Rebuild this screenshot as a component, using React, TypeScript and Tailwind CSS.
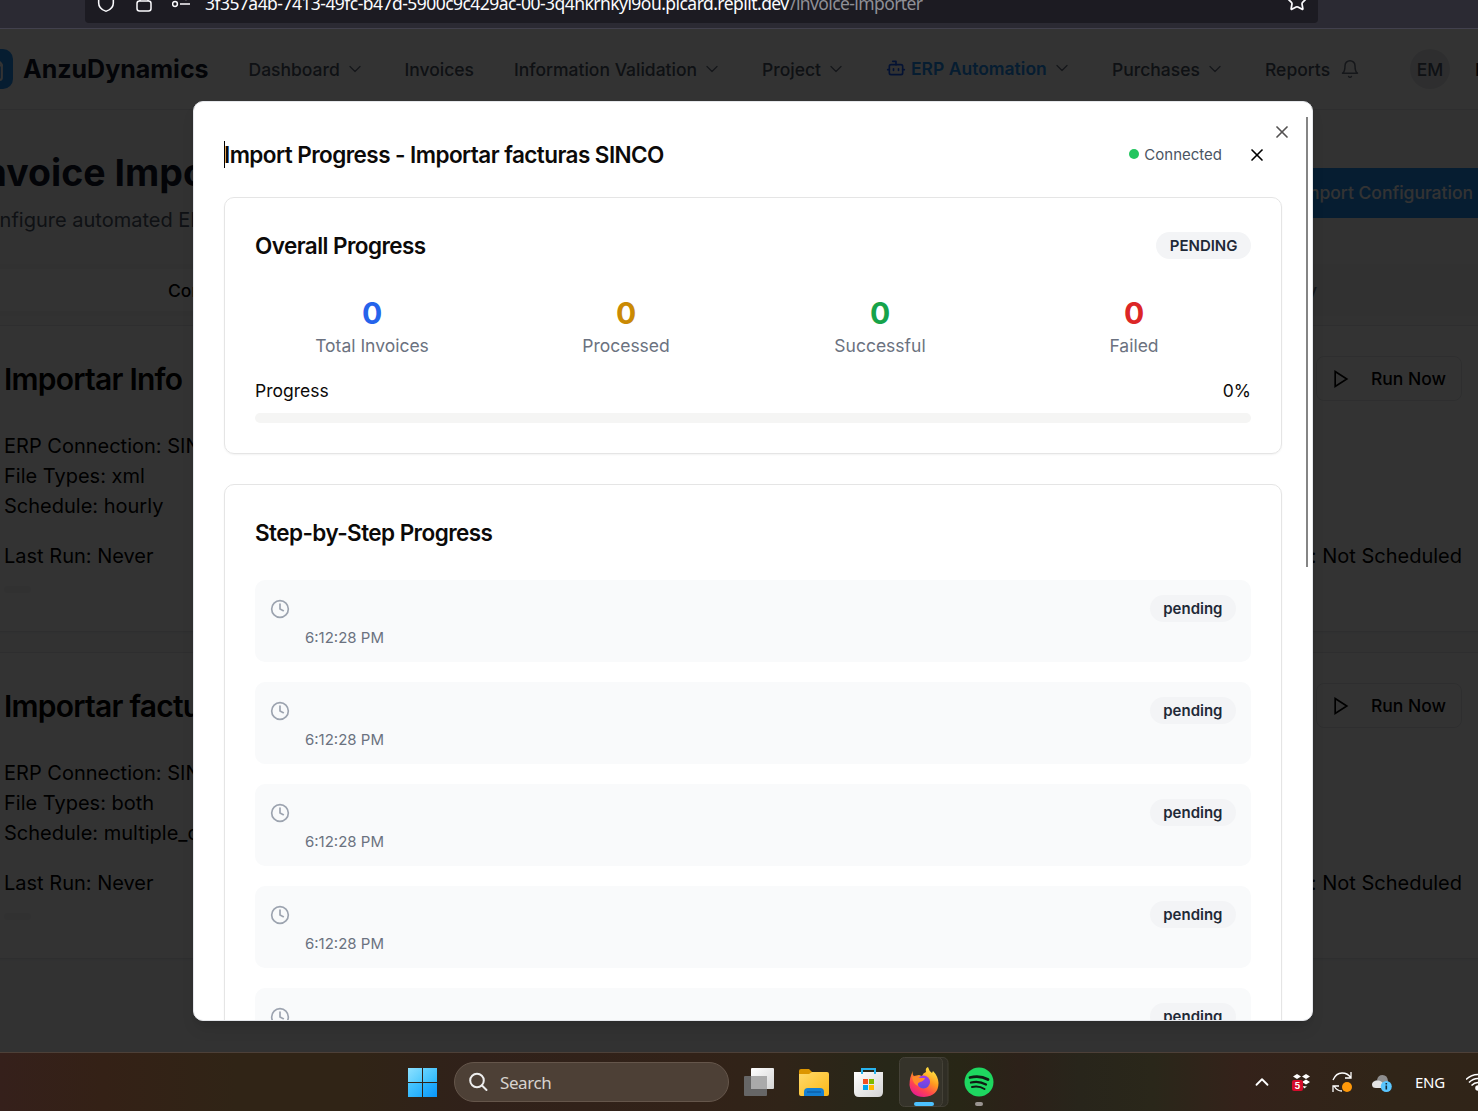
import React from "react";
import { Bot, ChevronDown, ChevronUp, Clock, FileText, X, Shield, Star } from "lucide-react";

function PlayIcon() {
  return (
    <svg className="size-5" viewBox="0 0 24 24" fill="none" stroke="currentColor" strokeWidth="2" strokeLinecap="round">
      <polygon points="5 3 19 12 5 21" strokeLinejoin="miter" />
    </svg>
  );
}

function BellIcon() {
  return (
    <svg className="size-5 shrink-0 text-gray-500" viewBox="0 0 24 24" fill="none" stroke="currentColor" strokeWidth="1.8" strokeLinecap="round" strokeLinejoin="round">
      <path d="M6 8a6 6 0 0 1 12 0c0 7 3 9 3 9H3s3-2 3-9" />
      <path d="M10.3 21a1.94 1.94 0 0 0 3.4 0" />
    </svg>
  );
}

function NavItem({ label, width, chevron = true }: { label: string; width: number; chevron?: boolean }) {
  return (
    <div className="flex shrink-0 items-center text-[17.5px] font-medium text-gray-600" style={{ width }}>
      <span className="mt-[2px]">{label}</span>
      {chevron && <ChevronDown className="ml-[5px] size-5 text-gray-500" strokeWidth={1.6} />}
    </div>
  );
}

function BrowserBar() {
  return (
    <div className="h-[29px] shrink-0 overflow-hidden border-b border-[#42414d] bg-[#2b2a33] pl-[85px]">
      <div className="flex h-[23px] w-[1233px] items-end rounded-b-[4px] bg-[#1c1b22] text-[#fbfbfe]">
        <Shield className="mb-[10px] ml-[10px] size-[22px] shrink-0" strokeWidth={1.7} />
        <svg className="mb-[11px] ml-[19px] h-[20px] w-[16px] shrink-0" viewBox="0 0 16 20" fill="none" stroke="currentColor" strokeWidth="1.5">
          <rect x="1" y="9" width="14" height="10" rx="2.5" />
          <path d="M4 9V5a4 4 0 0 1 8 0v4" />
        </svg>
        <svg className="mb-[15px] ml-[20px] h-[17px] w-[18px] shrink-0" viewBox="0 0 18 17" fill="none" stroke="currentColor" strokeWidth="1.5">
          <circle cx="3" cy="13" r="2.4" />
          <path d="M8 13h10M0 6h10" />
          <circle cx="14" cy="6" r="2.4" />
        </svg>
        <div className="mb-[8px] ml-[15px] flex w-[1081px] whitespace-nowrap font-['Noto_Sans','Open_Sans',sans-serif] text-[17.5px] leading-6">
          <span className="w-[585px] tracking-[-0.54px]">3f357a4b-7413-49fc-b47d-5900c9c429ac-00-3q4hkrhkyl9ou.picard.replit.dev</span>
          <span className="tracking-[-0.6px] text-[#8f8f96]">/invoice-importer</span>
        </div>
        <Star className="mb-[11px] size-[22px] shrink-0" strokeWidth={1.9} />
      </div>
    </div>
  );
}

function Header() {
  return (
    <header className="flex h-[81px] items-center border-b border-gray-200 bg-white">
      <div className="-ml-[27px] flex size-10 shrink-0 items-center justify-center rounded-[10px] bg-[#2090f3]">
        <FileText className="size-[25px] text-white" />
      </div>
      <div className="ml-[10px] mt-[2px] w-[225.5px] shrink-0 text-[25px] font-bold text-gray-900">AnzuDynamics</div>
      <NavItem label="Dashboard" width={156} />
      <NavItem label="Invoices" width={109.5} chevron={false} />
      <NavItem label="Information Validation" width={248} />
      <NavItem label="Project" width={124} />
      <div className="relative -top-px flex w-[226px] shrink-0 items-center text-[17.5px] font-semibold text-[#2090f3]">
        <Bot className="mr-[5px] size-5 text-blue-600" />
        <span className="mt-[2px]">ERP Automation</span>
        <ChevronDown className="ml-[5px] size-5 text-gray-500" strokeWidth={1.6} />
      </div>
      <NavItem label="Purchases" width={153} />
      <NavItem label="Reports" width={75} chevron={false} />
      <BellIcon />
      <div className="ml-[50px] flex size-10 shrink-0 items-center justify-center rounded-full bg-gray-200 text-[17.5px] font-medium text-gray-600">
        <span className="mt-[2px]">EM</span>
      </div>
      <span className="ml-[25px] mt-[2px] text-[17.5px] font-medium text-gray-900">E</span>
    </header>
  );
}

function ConfigCard({ title, types, schedule }: { title: string; types: string; schedule: string }) {
  return (
    <section className="-mx-[27px] h-[307px] border border-gray-200 bg-white px-[30px] pt-[30px] shadow-[0_1px_2px_rgba(0,0,0,0.05)]">
      <div className="flex h-[47px] items-center justify-between">
        <h2 className="text-[30px] font-semibold tracking-[-0.75px]">{title}</h2>
        <div className="mb-[2px] mr-[12px] flex h-[45px] w-[146px] items-center rounded-[8px] border border-gray-200 pl-[14px] text-[17.5px] font-medium">
          <PlayIcon />
          <span className="ml-[20px] mt-px">Run Now</span>
        </div>
      </div>
      <div className="mt-[28px] text-[20px] leading-[30px]">
        <p>ERP Connection: SINCO</p>
        <p>File Types: {types}</p>
        <p>Schedule: {schedule}</p>
      </div>
      <div className="mr-[12px] mt-[20px] flex justify-between text-[20px] leading-[30px]">
        <span>Last Run: Never</span>
        <span>Next Run: Not Scheduled</span>
      </div>
      <div className="mt-[15px] h-[7px] w-[27px] rounded-full bg-gray-100" />
    </section>
  );
}

function Page() {
  return (
    <div className="h-[1023px] overflow-hidden bg-gray-50 text-black">
      <Header />
      <div className="flex h-[154px] justify-between overflow-hidden pt-[38px]">
        <div className="-ml-[27px] whitespace-nowrap">
          <h1 className="text-[37.5px] font-bold leading-[50px] text-gray-900">Invoice Importer</h1>
          <p className="mt-[7px] text-[20px] leading-[30px] text-gray-600">Configure automated ERP invoice imports</p>
        </div>
        <div className="mt-[20px] flex h-[50px] items-center whitespace-nowrap bg-[#2090f3] pl-8 pr-[5px] text-[17.5px] font-medium text-white">New Import Configuration</div>
      </div>
      <div className="flex h-[52px] items-center bg-stone-100 text-[17.5px] font-medium">
        <div className="flex h-[42px] w-[520px] items-center bg-white pl-[168px] pt-[2px]">Configurations</div>
        <div className="ml-[567px] w-[230px] pt-[2px] text-right text-gray-500">History</div>
      </div>
      <div className="mt-[9px] space-y-5">
        <ConfigCard title="Importar Info" types="xml" schedule="hourly" />
        <ConfigCard title="Importar facturas SINCO" types="both" schedule="multiple_daily" />
      </div>
    </div>
  );
}

const stats = [
  { label: "Total Invoices", color: "text-[#2563eb]" },
  { label: "Processed", color: "text-[#ca8a04]" },
  { label: "Successful", color: "text-[#16a34a]" },
  { label: "Failed", color: "text-[#dc2626]" },
];

function Badge({ children }: { children: React.ReactNode }) {
  return <span className="flex h-[27px] items-center rounded-full bg-[#f3f4f6] px-[13.5px] pt-px text-[15px] font-semibold text-[#1f2937]">{children}</span>;
}

function Step() {
  return (
    <div className="flex h-[82px] items-start rounded-[10px] bg-[#f9fafb] p-[15px]">
      <Clock className="mt-[4px] size-5 text-[#9ca3af]" />
      <div className="ml-[15px] mt-[32px] flex-1 text-[15px] leading-[22px] text-[#6b7280]">6:12:28 PM</div>
      <Badge>pending</Badge>
    </div>
  );
}

function Modal() {
  return (
    <div className="absolute left-[193px] top-[101px] h-[920px] w-[1120px] overflow-hidden rounded-[10px] border border-gray-200 bg-white px-[30px] pt-[30px] text-[#0c0a09] shadow-lg">
      <X className="absolute right-[20px] top-[20px] size-5 opacity-70" />
      <div className="absolute right-[4px] top-[15px] h-[450px] w-[2px] bg-[#858585]" />
      <div className="flex h-[45px] items-center justify-between">
        <div className="flex items-center">
          <span className="-mr-px h-[27px] w-px bg-black" />
          <h2 className="text-[22.5px] font-semibold tracking-[-0.5625px]">Import Progress - Importar facturas SINCO</h2>
        </div>
        <div className="mr-[15px] flex items-center text-[15px] text-[#4b5563]">
          <span className="mb-px mr-[5px] size-[10px] rounded-full bg-[#22c55e]" />
          <span className="mt-px">Connected</span>
          <X className="ml-[25px] size-5 text-black" />
        </div>
      </div>
      <section className="mt-[20px] h-[257px] rounded-[10px] border border-[#e5e5e5] px-[30px] pt-[30px] shadow-[0_1px_2px_rgba(0,0,0,0.05)]">
        <div className="flex h-[35px] items-center justify-between">
          <h3 className="text-[22.5px] font-semibold tracking-[-0.5625px]">Overall Progress</h3>
          <Badge>PENDING</Badge>
        </div>
        <div className="mt-[31px] grid grid-cols-4 gap-5 text-center">
          {stats.map((s) => (
            <div key={s.label}>
              <div className={`mb-px text-[30px] font-bold leading-[38px] ${s.color}`}>0</div>
              <div className="text-[17.5px] leading-[25px] text-[#6b7280]">{s.label}</div>
            </div>
          ))}
        </div>
        <div className="mt-[20px] flex justify-between text-[17.5px] leading-[25px]">
          <span>Progress</span>
          <span>0%</span>
        </div>
        <div className="mt-[10px] h-[10px] rounded-full bg-[#f5f5f4]" />
      </section>
      <section className="mt-[30px] rounded-[10px] border border-[#e5e5e5] px-[30px] pt-[30px] shadow-[0_1px_2px_rgba(0,0,0,0.05)]">
        <h3 className="h-[65px] text-[22.5px] font-semibold leading-[35px] tracking-[-0.5625px]">Step-by-Step Progress</h3>
        <div className="space-y-5 pb-[30px]">
          {[0, 1, 2, 3, 4, 5].map((i) => (
            <Step key={i} />
          ))}
        </div>
      </section>
    </div>
  );
}

function TaskbarIcons() {
  return (
    <svg className="ml-[11px] h-[58px] w-[280px] shrink-0" viewBox="740 1053 280 58">
      <defs>
        <linearGradient id="white" x1="0" y1="0" x2="1" y2="1"><stop stopColor="#fff" /><stop offset="1" stopColor="#d4d4d4" /></linearGradient>
        <linearGradient id="folder" x1="0" y1="0" x2="1" y2="1"><stop stopColor="#ffd96b" /><stop offset="1" stopColor="#fbb917" /></linearGradient>
        <linearGradient id="fox" x1=".8" y1="0" x2=".2" y2="1"><stop stopColor="#fff14a" /><stop offset=".4" stopColor="#ff9a1f" /><stop offset=".7" stopColor="#ff4450" /><stop offset="1" stopColor="#e3159a" /></linearGradient>
        <linearGradient id="globe" x1="0" y1="0" x2="0" y2="1"><stop stopColor="#a33bea" /><stop offset="1" stopColor="#5b4be0" /></linearGradient>
      </defs>
      <rect x="744" y="1076" width="23" height="20" rx="1" fill="#666" />
      <rect x="751" y="1068" width="23" height="21" rx="1" fill="url(#white)" />
      <path d="M751 1076h16v13h-16z" fill="#aaa" />
      <path d="M799 1071q0-2 2-2h8l3 3v5h-13z" fill="#dc9500" />
      <path d="M799 1074h10l3-2h15q2 0 2 2v20q0 2-2 2h-26q-2 0-2-2z" fill="url(#folder)" />
      <path d="M804 1096v-4q0-4 4-4h12q4 0 4 4v4z" fill="#137fd2" />
      <path d="M807 1092h14" stroke="#075398" />
      <path d="M854 1072h29v20q0 5-5 5h-19q-5 0-5-5z" fill="url(#white)" />
      <path d="M862 1074v-5h13v5" fill="none" stroke="#28b4ee" strokeWidth="2" />
      <path d="M863 1079h5v5h-5z" fill="#f25022" /><path d="M869 1079h5v5h-5z" fill="#7fba00" />
      <path d="M863 1085h5v5h-5z" fill="#00a4ef" /><path d="M869 1085h5v5h-5z" fill="#ffb900" />
      <rect x="904" y="1057.5" width="44" height="49" rx="5" fill="#302e25" stroke="#413e34" />
      <rect x="899.5" y="1057.5" width="43" height="49" rx="5" fill="#35332a" stroke="#454238" />
      <path d="M913 1071q-1 4 1 5l5-1 3 1q1-3 4-4-1-4 2-5 1 4 4 6l1-2q5 5 5.500 12 0 13-14.500 14-13 0-14.500-12 0-8 3.500-14z" fill="url(#fox)" />
      <circle cx="923.5" cy="1082" r="6.500" fill="url(#globe)" />
      <path d="M912 1077q5-1 8 1h5q-1 3-5 4-3 1-2 4-5-2-6-9z" fill="#ff8b2a" />
      <rect x="914" y="1102" width="20" height="4" rx="2" fill="#4cc2ff" />
      <circle cx="979" cy="1082" r="14.5" fill="#1ed760" />
      <g fill="none" stroke="#101b14" strokeLinecap="round">
        <path d="M970 1077.500q10-2.500 18 2" strokeWidth="2.800" />
        <path d="M971 1082.500q8-2 15 2" strokeWidth="2.300" />
        <path d="M972 1087q7-1.500 12.500 2" strokeWidth="2" />
      </g>
      <rect x="975" y="1102" width="8" height="4" rx="2" fill="#9a9490" />
    </svg>
  );
}

function Tray() {
  return (
    <svg className="h-[40px] w-[104px] shrink-0" viewBox="1290 1062 104 40">
      <path d="m1297 1074 4 2.500-4 2.500-4-2.500zM1306 1074l4 2.500-4 2.500-4-2.500zM1306 1079.500l4 2.500-4 2.500-4-2.500zM1303 1086l4 .5-3 2z" fill="#fff" />
      <rect x="1292" y="1080" width="11" height="11" rx="2" fill="#d50b2b" />
      <text x="1297.500" y="1089" textAnchor="middle" fontSize="9" fontWeight="700" fill="#fff">5</text>
      <g fill="none" stroke="#fff" strokeWidth="1.300">
        <path d="M1333 1080q3-7 9-7 6 0 9 5M1351 1072v6h-6M1342 1091q-5 0-8-5M1333 1092v-6h6" />
      </g>
      <circle cx="1347" cy="1087" r="5" fill="#ff990a" />
      <path d="M1376 1087q-3 0-3-3.500 0-3 4-3.500 1-5 5.500-5 5 0 5.500 6v6z" fill="#8e8e8e" />
      <path d="M1376 1088q-4 0-4-3.500 0-3 3.500-3.500 5-2 8 3v4z" fill="#e4e4e4" />
      <circle cx="1386.300" cy="1086.500" r="5.500" fill="#5ac6ff" />
      <path d="M1386.300 1083v1.500M1386.300 1085.500v4" stroke="#152c3d" strokeWidth="1.600" />
    </svg>
  );
}

function Taskbar() {
  return (
    <footer className="flex h-[59px] shrink-0 items-center border-t border-[#4d4038] bg-[linear-gradient(90deg,#35201b_0%,#342116_7%,#302416_16%,#302416_24%,#30211a_32%,#322218_47%,#302418_53%,#272718_60%,#282616_65%,#2c2119_69%,#28251b_73%,#2a271a_78%,#34221a_84%,#302518_94%,#302418_100%)]">
      <div className="ml-[408px] grid h-[29px] w-[29px] shrink-0 grid-cols-2 gap-px">
        <span className="bg-linear-to-br from-[#8be0ff] to-[#4cc9fd]" />
        <span className="bg-linear-to-br from-[#65d3ff] to-[#29b8fb]" />
        <span className="bg-linear-to-br from-[#4ac8ff] to-[#1fabfb]" />
        <span className="bg-linear-to-br from-[#2eb7fd] to-[#0796fa]" />
      </div>
      <div className="ml-[17px] flex h-[40px] w-[275px] shrink-0 items-center rounded-full border border-[#65564b] bg-[#4d4036] font-['Noto_Sans','Open_Sans',sans-serif] text-[17px] text-[#d8d3cf]">
        <svg className="ml-[13px] mr-[12px] size-5" viewBox="0 0 20 20" fill="none" stroke="#eee" strokeWidth="2" strokeLinecap="round">
          <circle cx="9" cy="8.500" r="6.800" />
          <path d="m14 13.500 4.500 4.500" />
        </svg>
        <span className="mt-px tracking-[-0.4px]">Search</span>
      </div>
      <TaskbarIcons />
      <ChevronUp className="ml-[231px] size-[22px] shrink-0 text-white" strokeWidth={2} />
      <div className="ml-[17px] w-[125px] shrink-0"><Tray /></div>
      <span className="w-[51px] shrink-0 font-['Noto_Sans',sans-serif] text-[15px] tracking-[-0.3px] text-white">ENG</span>
      <svg className="h-[20px] w-[12px] shrink-0" viewBox="0 0 12 20" fill="none" stroke="#fff" strokeWidth="1.600">
        <path d="M0 7.500q5-5 12-5M3 10.500q4-4 9-4M5.500 13.500q3-3 6.500-3" />
        <circle cx="12" cy="16" r="2" fill="#fff" />
      </svg>
    </footer>
  );
}

export default function App() {
  return (
    <div className="relative flex h-[1111px] w-[1478px] flex-col overflow-hidden bg-[#333] font-['Inter',sans-serif]">
      <BrowserBar />
      <main className="relative h-[1023px] shrink-0">
        <Page />
        <div className="absolute inset-0 bg-black/80" />
      </main>
      <Taskbar />
      <Modal />
    </div>
  );
}
